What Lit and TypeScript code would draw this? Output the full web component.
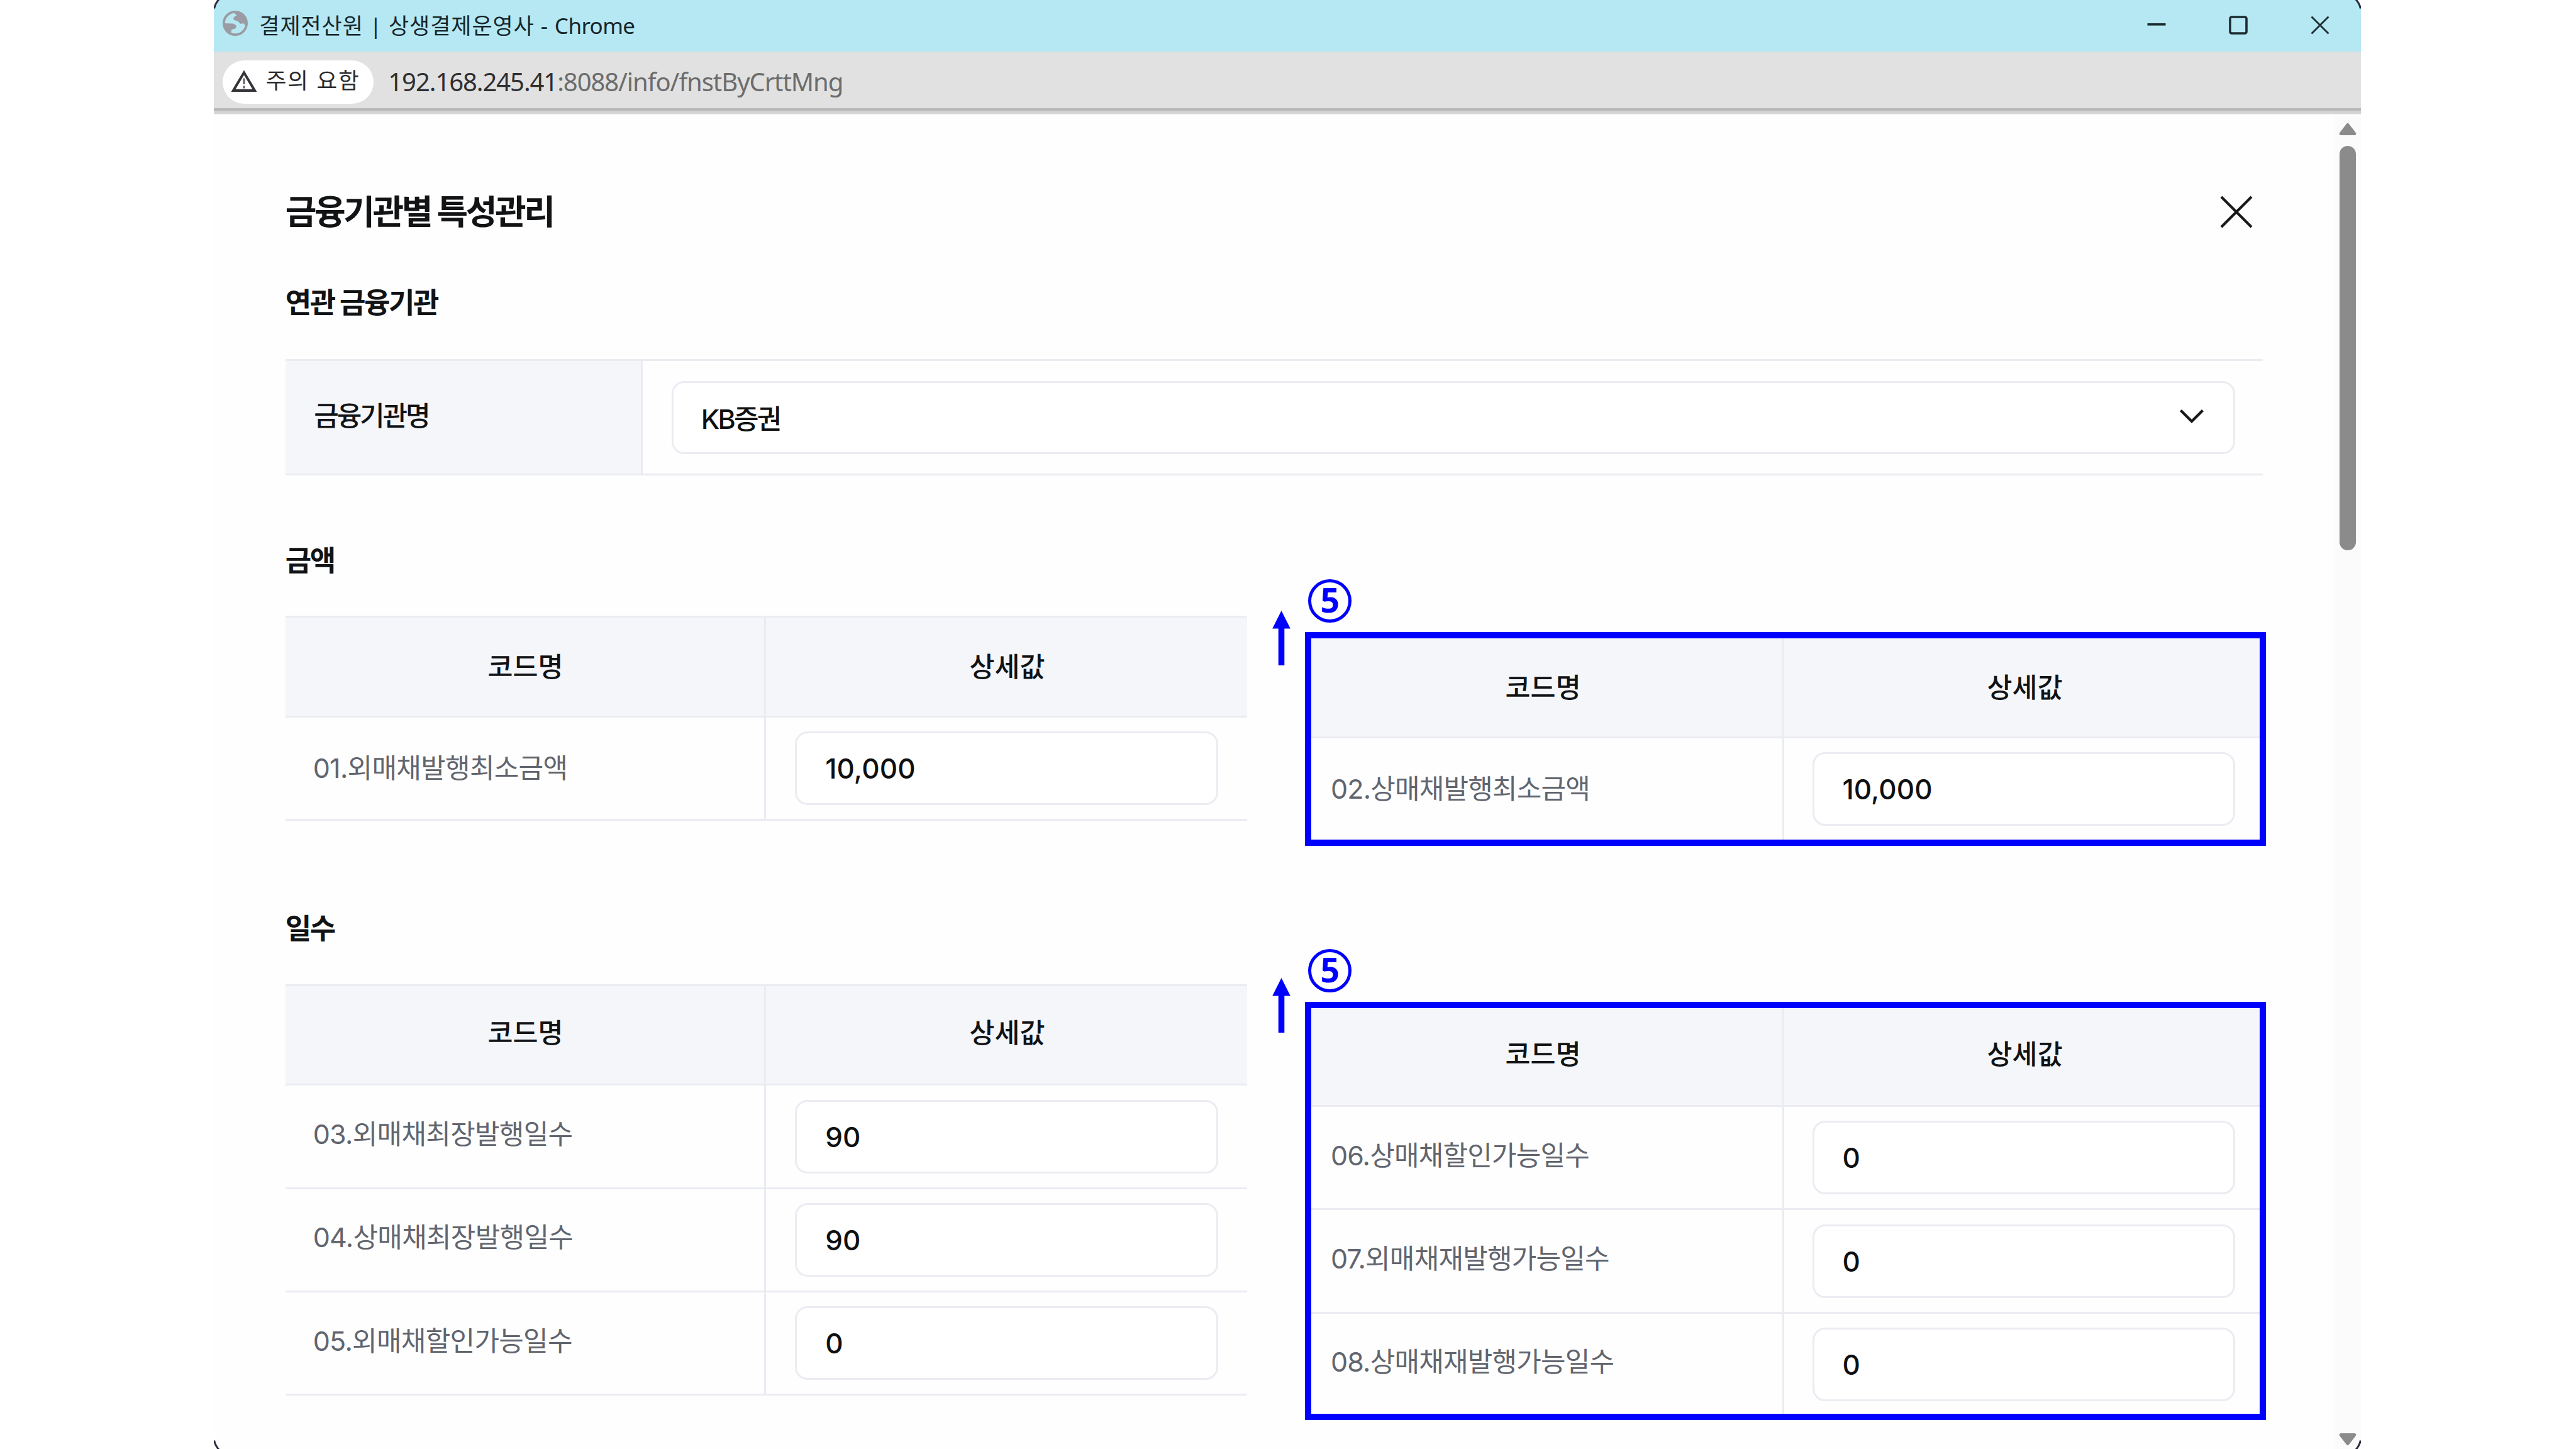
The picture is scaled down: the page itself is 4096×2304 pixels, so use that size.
import { LitElement, html, css } from "lit";
import { customElement, property } from "lit/decorators.js";
import { classMap } from "lit/directives/class-map.js";

interface Row {
  code: string;
  value: string;
}

interface Section {
  title: string;
  variant: string;
  left: Row[];
  right: Row[];
}

const SECTIONS: Section[] = [
  {
    title: "금액",
    variant: "amount",
    left: [{ code: "01.외매채발행최소금액", value: "10,000" }],
    right: [{ code: "02.상매채발행최소금액", value: "10,000" }],
  },
  {
    title: "일수",
    variant: "days",
    left: [
      { code: "03.외매채최장발행일수", value: "90" },
      { code: "04.상매채최장발행일수", value: "90" },
      { code: "05.외매채할인가능일수", value: "0" },
    ],
    right: [
      { code: "06.상매채할인가능일수", value: "0" },
      { code: "07.외매채재발행가능일수", value: "0" },
      { code: "08.상매채재발행가능일수", value: "0" },
    ],
  },
];

@customElement("title-bar")
class TitleBar extends LitElement {
  static styles = css`
    :host {
      display: flex;
      align-items: center;
      height: 82px;
      background: #b5e8f3;
      color: #16262b;
      font-family: "Noto Sans", "Noto Sans CJK KR", sans-serif;
      font-size: 35px;
      line-height: 60px;
      white-space: nowrap;
    }
    .globe {
      width: 40px;
      height: 40px;
      margin: 0 18px 9px 14px;
    }
    .title {
      flex: 1;
      display: flex;
      white-space: pre;
      padding-bottom: 0;
    }
    .page {
      letter-spacing: 0.9px;
    }
    .app {
      letter-spacing: -0.6px;
    }
    .controls {
      display: flex;
      gap: 100px;
      padding-right: 50px;
      padding-bottom: 2.5px;
    }
    .controls svg {
      width: 30px;
      height: 30px;
      fill: none;
      stroke: #1c2a2e;
      stroke-width: 3.6;
    }
  `;

  render() {
    return html`
      <svg class="globe" viewBox="0 0 148 148">
        <circle cx="74" cy="74" r="67" fill="none" stroke="#9b9ba4" stroke-width="14" />
        <path
          fill="#9b9ba4"
          d="M62 8 L84 6 Q132 18 142 70 L132 84 L120 74 L104 78 L90 62 L70 56 L62 46 L70 34 L84 28 Z"
        />
        <path
          fill="#9b9ba4"
          d="M6 74 L62 76 L80 86 L80 98 L68 108 L54 110 L50 122 L54 140 Q12 124 6 74 Z"
        />
      </svg>
      <div class="title">
        <span class="page">결제전산원 | 상생결제운영사 - </span><span class="app">Chrome</span>
      </div>
      <div class="controls">
        <svg viewBox="0 0 30 30"><path d="M0.5 13.8H29.5" /></svg>
        <svg viewBox="0 0 30 30"><rect x="2" y="2" width="26" height="26" rx="2.5" /></svg>
        <svg viewBox="0 0 30 30"><path d="M1.5 1.5 28.5 28.5M28.5 1.5 1.5 28.5" stroke-width="2.8" /></svg>
      </div>
    `;
  }
}

@customElement("address-bar")
class AddressBar extends LitElement {
  static styles = css`
    :host {
      display: flex;
      align-items: flex-start;
      box-sizing: border-box;
      height: 100px;
      padding: 13.5px 0 0 14px;
      background: linear-gradient(#e1e1e1 90px, #b8b8b8 90px 94px, #d4d4d4 94px 99px, #ededed 99px);
      line-height: 60px;
      white-space: nowrap;
    }
    .chip {
      display: flex;
      align-items: center;
      box-sizing: border-box;
      width: 240px;
      height: 69px;
      padding: 0 0 3px 13px;
      border-radius: 35px;
      background: #fff;
      color: #2b2c30;
      font-family: Inter, "Noto Sans CJK KR", sans-serif;
      font-size: 35.5px;
      letter-spacing: 1.8px;
    }
    .chip svg {
      width: 42px;
      height: 36px;
      margin-right: 13.5px;
    }
    .url {
      margin-left: 23px;
      padding-top: 4.5px;
      font-family: "Noto Sans", sans-serif;
      font-size: 40px;
      letter-spacing: -1.07px;
      color: #6c6c6c;
    }
    .host {
      color: #2e2e30;
    }
  `;

  render() {
    return html`
      <div class="chip">
        <svg viewBox="0 0 42 36">
          <path d="M21 4.5 38 33H4Z" fill="none" stroke="#333437" stroke-width="4" />
          <path d="M21 13.5v9.5M21 25.5v4" stroke="#6a6b6e" stroke-width="3.4" />
        </svg>
        <span>주의 요함</span>
      </div>
      <div class="url"><span class="host">192.168.245.41</span>:8088/info/fnstByCrttMng</div>
    `;
  }
}

@customElement("code-table")
class CodeTable extends LitElement {
  @property({ attribute: false }) rows: Row[] = [];
  @property() variant = "amount";
  @property({ type: Boolean }) boxed = false;

  static styles = css`
    :host {
      display: block;
    }
    .table {
      box-sizing: border-box;
      font-family: Inter, "Noto Sans CJK KR", sans-serif;
      font-size: 43px;
      line-height: 60px;
      white-space: nowrap;
    }
    .open {
      width: 1529px;
      border-top: 3px solid #ebecf2;
    }
    .row {
      display: grid;
      grid-template-columns: 764.5px 1fr;
      box-sizing: border-box;
      height: 164.3px;
      border-bottom: 3px solid #ebecf2;
    }
    .head {
      height: 158.2px;
      background: #f4f6fa;
      color: #111315;
      font-weight: 500;
      font-size: 43.5px;
    }
    .cell {
      display: flex;
      align-items: center;
      box-sizing: border-box;
      min-width: 0;
      padding: 0 46px 1px 44px;
    }
    .days .cell {
      padding-bottom: 8px;
    }
    .cell:first-child {
      border-right: 3px solid #ebecf2;
    }
    .head .cell {
      justify-content: center;
      padding-left: 2px;
      padding-right: 0;
    }
    .code {
      color: #61656e;
      letter-spacing: -0.7px;
    }
    .row .field,
    .days .row .field {
      padding-left: 45.5px;
      padding-bottom: 0;
    }
    .input {
      flex: 1;
      box-sizing: border-box;
      height: 117px;
      border: 3px solid #ebecf2;
      border-radius: 20px;
      padding-left: 45.5px;
      background: #fff;
      color: #0f1011;
      font-size: 44px;
      font-weight: 500;
      line-height: 112px;
      letter-spacing: 0.1px;
    }

    /* Highlighted table: the frame clips the outer rules of the grid. */
    .boxed {
      width: 1528px;
      height: 339.6px;
      overflow: hidden;
      border: 10px solid #0000ff;
    }
    .boxed.days {
      height: 664.8px;
    }
    .boxed .row {
      grid-template-columns: 751.5px 1fr;
    }
    .boxed .head {
      height: 159.3px;
    }
    .boxed.days .head {
      height: 157px;
    }
    .boxed .cell {
      padding-left: 30.5px;
    }
    .boxed .head .cell {
      padding-left: 0;
      padding-right: 12px;
    }
    .boxed .head .cell:last-child {
      padding-left: 9px;
      padding-right: 0;
    }
    .boxed .code {
      letter-spacing: -0.8px;
    }
    .boxed .row .field {
      padding-left: 45px;
      padding-right: 39.5px;
    }
    .boxed .input {
      padding-left: 44.5px;
    }
  `;

  render() {
    return html`
      <div
        class=${classMap({
          table: true,
          open: !this.boxed,
          boxed: this.boxed,
          days: this.variant === "days",
        })}
      >
        <div class="row head">
          <div class="cell">코드명</div>
          <div class="cell">상세값</div>
        </div>
        ${this.rows.map(
          (row) => html`
            <div class="row">
              <div class="cell code">${row.code}</div>
              <div class="cell field"><div class="input">${row.value}</div></div>
            </div>
          `,
        )}
      </div>
    `;
  }
}

@customElement("app-root")
class AppRoot extends LitElement {
  static styles = css`
    :host {
      display: block;
      width: 4096px;
      height: 2304px;
      overflow: hidden;
      background: #fff;
      font-family: Inter, "Noto Sans CJK KR", sans-serif;
    }
    .window {
      position: relative;
      display: flex;
      flex-direction: column;
      width: 3413.7px;
      height: 2304px;
      margin-left: 340.3px;
      background: #fefefe;
    }
    .corner {
      position: absolute;
      width: 16px;
      height: 16px;
    }
    .tl {
      left: 0;
      top: 0;
    }
    .tr {
      right: 0;
      top: 0;
      transform: scaleX(-1);
    }
    .bl {
      left: 0;
      bottom: 0;
      transform: scaleY(-1);
    }
    .br {
      right: 0;
      bottom: 0;
      transform: scale(-1);
    }
    .body {
      flex: 1;
      display: flex;
      min-height: 0;
    }
    .page {
      flex: 1;
      min-width: 0;
      padding: 125px 0 0 113.4px;
      color: #111315;
    }
    .scroll {
      display: flex;
      flex-direction: column;
      align-items: center;
      box-sizing: border-box;
      width: 41.5px;
      padding: 13px 0 5px;
      background: #fbfbfb;
    }
    .scroll svg {
      width: 28px;
      height: 21px;
      fill: #8b8b8b;
      stroke: #8b8b8b;
      stroke-width: 5;
      stroke-linejoin: round;
    }
    .thumb {
      width: 26px;
      height: 643px;
      margin: 15.5px 0 auto;
      border-radius: 13px;
      background: #8b8b8b;
    }
    .top {
      display: flex;
      justify-content: space-between;
      align-items: center;
      width: 3128px;
      height: 60px;
    }
    .top svg {
      width: 52px;
      height: 52px;
      fill: none;
      stroke: #16181a;
      stroke-width: 4.2;
    }
    h1,
    h2 {
      margin: 0;
      font-weight: 700;
      line-height: 60px;
      white-space: nowrap;
    }
    h1 {
      padding-top: 2px;
      font-size: 54px;
      letter-spacing: -3.4px;
    }
    h2 {
      height: 60px;
      line-height: 62px;
      font-size: 45px;
      letter-spacing: -2.4px;
    }
    .related {
      margin-top: 84px;
    }
    .info {
      display: flex;
      box-sizing: border-box;
      width: 3144.5px;
      height: 184.5px;
      margin-top: 60.3px;
      border: 3px solid #ebecf2;
      border-width: 3px 0;
      white-space: nowrap;
      font-size: 43px;
      font-weight: 500;
    }
    .name {
      display: flex;
      align-items: center;
      box-sizing: border-box;
      width: 568px;
      padding: 0 0 12px 45.5px;
      border-right: 3px solid #ebecf2;
      background: #f4f6fa;
      letter-spacing: -3.1px;
    }
    .choice {
      flex: 1;
      display: flex;
      align-items: center;
      padding: 0 44.5px 0 46px;
    }
    .select {
      flex: 1;
      display: flex;
      align-items: center;
      justify-content: space-between;
      box-sizing: border-box;
      height: 116px;
      padding: 0 45.5px 0 44px;
      border: 3px solid #ebecf2;
      border-radius: 20px;
      background: #fff;
      color: #0f1011;
      letter-spacing: -2.8px;
    }
    .select span {
      padding-bottom: 1px;
    }
    .select svg {
      width: 40px;
      height: 24px;
      margin-bottom: 3px;
      fill: none;
      stroke: #16181a;
      stroke-width: 4.3;
    }
    .amount-title {
      margin-top: 105.7px;
    }
    .days-title {
      margin-top: 101px;
    }
    .pair {
      display: flex;
      align-items: flex-start;
      gap: 92.7px;
      margin-top: 58px;
    }
    .pair.days {
      margin-top: 59.6px;
    }
    .marked {
      position: relative;
      margin-top: 25.5px;
    }
    .days .marked {
      margin-top: 28px;
    }
    .arrow {
      position: absolute;
      left: -52px;
      top: -34px;
      width: 29px;
      height: 87px;
      fill: #0000ff;
    }
    .days .arrow {
      top: -38px;
    }
    .mark {
      position: absolute;
      left: 5px;
      top: -84px;
      display: flex;
      align-items: center;
      justify-content: center;
      box-sizing: border-box;
      width: 69px;
      height: 69px;
      border: 5px solid #0000ff;
      border-radius: 50%;
      color: #0000ff;
      font-family: "Noto Sans", sans-serif;
      font-weight: 700;
      font-size: 53.5px;
      line-height: 60px;
      padding-bottom: 3px;
    }
  `;

  private corner(place: string) {
    return html`<svg class="corner ${place}" viewBox="0 0 16 16">
      <path d="M0 0H7Q2 5 0 12Z" fill="#fff" />
      <path d="M0.6 13.5Q2 6 8 -1" fill="none" stroke="#2a2b3c" stroke-width="3" />
    </svg>`;
  }

  private section(s: Section) {
    return html`
      <h2 class="${s.variant}-title">${s.title}</h2>
      <div class="pair ${s.variant}">
        <code-table .rows=${s.left} variant=${s.variant}></code-table>
        <div class="marked">
          <code-table .rows=${s.right} variant=${s.variant} boxed></code-table>
          <svg class="arrow" viewBox="0 0 29 87">
            <path d="M14.5 0 28.8 28.5H19.3V87H9.7V28.5H0.2Z" />
          </svg>
          <span class="mark">5</span>
        </div>
      </div>
    `;
  }

  render() {
    return html`
      <div class="window">
        <title-bar></title-bar>
        <address-bar></address-bar>
        <div class="body">
          <div class="page">
            <div class="top">
              <h1>금융기관별 특성관리</h1>
              <svg viewBox="0 0 52 52"><path d="M2 2 50 50M50 2 2 50" /></svg>
            </div>
            <h2 class="related">연관 금융기관</h2>
            <div class="info">
              <div class="name">금융기관명</div>
              <div class="choice">
                <div class="select">
                  <span>KB증권</span>
                  <svg viewBox="0 0 40 24"><path d="M2.5 2.5 20 20 37.5 2.5" /></svg>
                </div>
              </div>
            </div>
            ${SECTIONS.map((s) => this.section(s))}
          </div>
          <div class="scroll">
            <svg viewBox="0 0 28 21"><path d="M14 3.5 24.8 17.5H3.2Z" /></svg>
            <div class="thumb"></div>
            <svg viewBox="0 0 28 21"><path d="M14 17.5 3.2 3.5H24.8Z" /></svg>
          </div>
        </div>
        ${["tl", "tr", "bl", "br"].map((p) => this.corner(p))}
      </div>
    `;
  }
}
